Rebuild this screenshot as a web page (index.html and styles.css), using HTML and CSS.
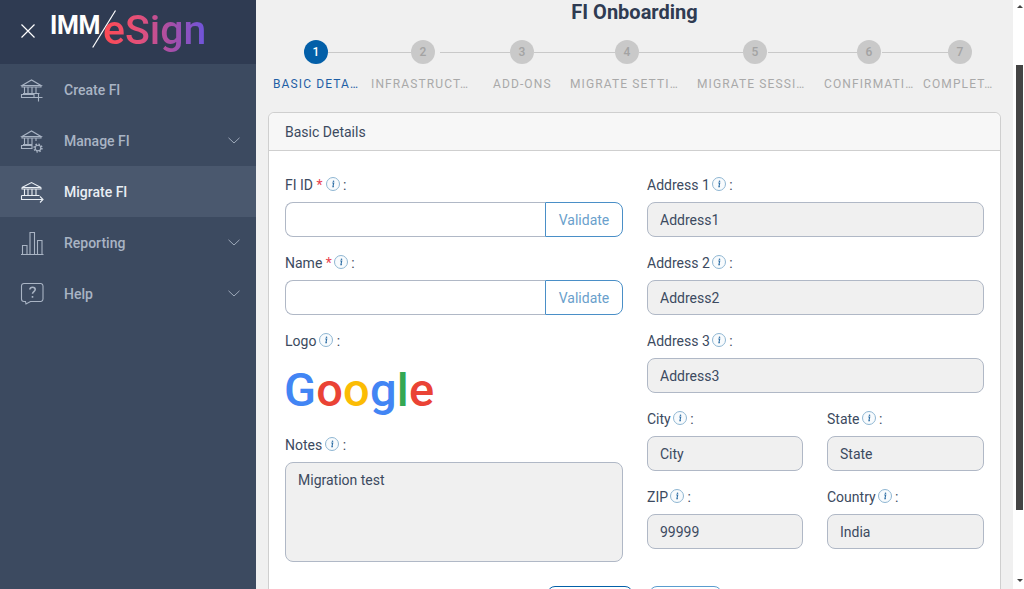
FILE: index.html
```html
<!DOCTYPE html>
<html lang="en">
<head>
<meta charset="utf-8">
<title>FI Onboarding</title>
<link rel="stylesheet" href="styles.css">
</head>
<body>
<div class="app">
  <aside class="sidebar">
    <header class="brand">
      <svg class="close" viewBox="0 0 14 14"><path d="M.5.5l13 13M13.5.5l-13 13"/></svg>
      <div class="wordmark">
        <span class="imm">IMM</span>
        <svg class="slash" viewBox="0 0 24 38"><path d="M23.5.5L.7 37.5"/></svg>
        <span class="esign">eSign</span>
      </div>
    </header>
    <nav>
      <a class="nav-item">
        <svg class="nav-icon" viewBox="0 0 24 24"><path d="M2 7.500L11.500 2 21 7.500zM2 7.500v1.500h19V7.500M4.500 9v6.500M8 9v6.500M12 9v6.500M16 9v6.500M3 15.500h16.500M1.500 19.500h12.500v-3H1.500zM18.500 15.500v8M14.500 19.500h8"/></svg>
        <span>Create FI</span>
      </a>
      <a class="nav-item">
        <svg class="nav-icon" viewBox="0 0 24 24"><path d="M2 7.500L11.500 2 21 7.500zM2 7.500v1.500h19V7.500M4.500 9v6.500M8 9v6.500M12 9v6.500M16 9v3M3 15.500h9.500M1.500 19.500h10.500v-3H1.500z"/><circle cx="18" cy="19" r="2.800"/><circle class="dash" cx="18" cy="19" r="3.900"/></svg>
        <span>Manage FI</span>
        <svg class="chevron" viewBox="0 0 12 7"><path d="M.5.800L6 6l5.500-5.200"/></svg>
      </a>
      <a class="nav-item active">
        <svg class="nav-icon" viewBox="0 0 24 24"><path d="M2 7.500L11.500 2.500 21 7.500zM2 7.500v1.500h19V7.500M4.500 9v6M8 9v6M12 9v6M16 9v6M1.500 15.500h18M1.500 15.500v4h21.500M20 16.500l3 3-3 3"/></svg>
        <span>Migrate FI</span>
      </a>
      <a class="nav-item">
        <svg class="nav-icon" viewBox="0 0 24 24"><path d="M1 23.500h22.500M2.500 23V14.500H7V23M10 23V1.500h4.500V23M17.500 23V9.500H22V23"/></svg>
        <span>Reporting</span>
        <svg class="chevron" viewBox="0 0 12 7"><path d="M.5.800L6 6l5.500-5.200"/></svg>
      </a>
      <a class="nav-item">
        <svg class="nav-icon" viewBox="0 0 24 24"><path d="M4 1.500h17a2.500 2.500 0 0 1 2 2.500v13a2.500 2.500 0 0 1-2 2.500h-10.500l-4.500 2.500-.5-2.500H4A2.500 2.500 0 0 1 1.500 17V4A2.500 2.500 0 0 1 4 1.500z"/><path class="q" d="M9.800 7.500c.2-1.500 1.300-2.300 2.700-2.300 1.500 0 2.700 1 2.700 2.300 0 2-2.700 2.200-2.700 4.300M12.500 14v1.800"/></svg>
        <span>Help</span>
        <svg class="chevron" viewBox="0 0 12 7"><path d="M.5.800L6 6l5.500-5.200"/></svg>
      </a>
    </nav>
  </aside>

  <main class="main">
    <h1 class="title">FI Onboarding</h1>

    <div class="track">
      <span class="dot current">1</span><i class="link l1"></i>
      <span class="dot">2</span><i class="link l2"></i>
      <span class="dot">3</span><i class="link l3"></i>
      <span class="dot">4</span><i class="link l4"></i>
      <span class="dot">5</span><i class="link l5"></i>
      <span class="dot">6</span><i class="link l6"></i>
      <span class="dot">7</span>
    </div>
    <div class="labels">
      <span class="step current">BASIC DETA…</span>
      <span class="step">INFRASTRUCT…</span>
      <span class="step">ADD-ONS</span>
      <span class="step">MIGRATE SETTI…</span>
      <span class="step">MIGRATE SESSI…</span>
      <span class="step">CONFIRMATI…</span>
      <span class="step">COMPLET…</span>
    </div>

    <section class="card">
      <div class="card-head">Basic Details</div>
      <div class="card-body">
        <div class="columns">
          <div class="col">
            <div class="field">
              <label class="lbl">FI ID <b>*</b><svg class="info" viewBox="0 0 14 14"><use href="#i"/></svg> :</label>
              <div class="group"><input class="input" type="text"><button class="validate">Validate</button></div>
            </div>
            <div class="field name">
              <label class="lbl">Name <b>*</b><svg class="info" viewBox="0 0 14 14"><use href="#i"/></svg> :</label>
              <div class="group"><input class="input" type="text"><button class="validate">Validate</button></div>
            </div>
            <div class="logo-field">
              <label class="lbl">Logo<svg class="info" viewBox="0 0 14 14"><use href="#i"/></svg> :</label>
              <div class="google"><span class="gb">G</span><span class="gr">o</span><span class="gy">o</span><span class="gb">g</span><span class="gg">l</span><span class="gr">e</span></div>
            </div>
            <div class="notes">
              <label class="lbl">Notes<svg class="info" viewBox="0 0 14 14"><use href="#i"/></svg> :</label>
              <textarea class="input area" disabled>Migration test</textarea>
            </div>
          </div>
          <div class="col">
            <div class="field">
              <label class="lbl">Address 1<svg class="info" viewBox="0 0 14 14"><use href="#i"/></svg> :</label>
              <input class="input" type="text" value="Address1" disabled>
            </div>
            <div class="field">
              <label class="lbl">Address 2<svg class="info" viewBox="0 0 14 14"><use href="#i"/></svg> :</label>
              <input class="input" type="text" value="Address2" disabled>
            </div>
            <div class="field">
              <label class="lbl">Address 3<svg class="info" viewBox="0 0 14 14"><use href="#i"/></svg> :</label>
              <input class="input" type="text" value="Address3" disabled>
            </div>
            <div class="pair">
              <div class="field">
                <label class="lbl">City<svg class="info" viewBox="0 0 14 14"><use href="#i"/></svg> :</label>
                <input class="input" type="text" value="City" disabled>
              </div>
              <div class="field">
                <label class="lbl">State<svg class="info" viewBox="0 0 14 14"><use href="#i"/></svg> :</label>
                <input class="input" type="text" value="State" disabled>
              </div>
              <div class="field last">
                <label class="lbl">ZIP<svg class="info" viewBox="0 0 14 14"><use href="#i"/></svg> :</label>
                <input class="input" type="text" value="99999" disabled>
              </div>
              <div class="field last">
                <label class="lbl">Country<svg class="info" viewBox="0 0 14 14"><use href="#i"/></svg> :</label>
                <input class="input" type="text" value="India" disabled>
              </div>
            </div>
          </div>
        </div>
        <div class="actions">
          <button class="btn primary"></button>
          <button class="btn secondary"></button>
        </div>
      </div>
    </section>
  </main>

  <div class="scrollbar">
    <span class="arrow up"></span>
    <span class="thumb"></span>
    <span class="arrow down"></span>
  </div>
</div>

<svg class="defs" width="0" height="0">
  <symbol id="i" viewBox="0 0 14 14">
    <circle cx="7" cy="7" r="6.500" fill="#f8fbfd" stroke="#8fb6d2"/>
    <path d="M6.200 6h1.500l-.8 3.600h1" fill="none" stroke="#2d6ea5" stroke-width="1.100"/>
    <circle cx="7.500" cy="4.200" r=".8" fill="#2d6ea5"/>
  </symbol>
</svg>
</body>
</html>
```
FILE: styles.css
```css
* { box-sizing: border-box; }
html, body { margin: 0; height: 589px; overflow: hidden; }
body { font-family: Roboto, "Liberation Sans", sans-serif; font-size: 14px; color: #3c4a60; background: #f0f0f0; }
.defs { position: absolute; }

.app { display: flex; height: 589px; overflow: hidden; }

/* Sidebar */
.sidebar { width: 256px; flex: none; background: #3c4a60; }
.brand { height: 64px; background: #2f3b52; display: flex; align-items: flex-start; padding: 10px 0 0 21px; }
.close { width: 14px; height: 14px; margin-top: 14px; fill: none; stroke: #fff; stroke-width: 1.200; flex: none; }
.wordmark { position: relative; display: flex; align-items: flex-start; margin-left: 16px; height: 44px; width: 160px; }
.imm { font-family: Roboto, sans-serif; font-weight: 700; font-size: 25px; line-height: 26px; letter-spacing: -.4px; color: #fff; margin: 3px 0 0 -1px; }
.slash { position: absolute; left: 41px; top: 0; width: 24px; height: 38px; fill: none; stroke: #fff; stroke-width: 1.200; }
.esign { position: absolute; left: 52px; top: -5px; font-family: Roboto, sans-serif; font-weight: 500; font-size: 41px; line-height: 50px; background: linear-gradient(90deg, #ff4a52 0%, #e3507a 35%, #a84fa6 65%, #6d55dc 100%); -webkit-background-clip: text; background-clip: text; color: transparent; }

.nav-item { height: 51px; display: flex; align-items: center; padding: 0 16px 0 20px; color: #a9b4c4; font-weight: 500; }
.nav-item.active { background: #4a586e; color: #e9eef4; }
.nav-icon { width: 24px; height: 26px; flex: none; margin-right: 20px; fill: none; stroke: #a9b4c4; stroke-width: 1.100; }
.nav-item.active .nav-icon { stroke: #e9eef4; }
.nav-icon .dash { stroke-dasharray: 1.500 1.560; stroke-width: 1.500; }
.nav-icon .q { stroke-width: 1.600; }
.chevron { width: 12px; height: 7px; margin-left: auto; fill: none; stroke: #a9b4c4; stroke-width: .9; }

/* Main */
.main { flex: 1; min-width: 0; padding: 0 12px; overflow: hidden; }
.title { margin: 0; height: 24px; line-height: 24px; font-size: 20px; font-weight: 700; text-align: center; color: #2f3b52; }

.track { display: flex; align-items: center; margin-top: 16px; padding-left: 36px; height: 24px; }
.dot { width: 24px; height: 24px; flex: none; border-radius: 50%; background: #c9c9c9; color: #a3a3a3; font-size: 12px; font-weight: 500; line-height: 24px; text-align: center; }
.dot.current { background: #035fa8; color: #fff; }
.link { display: block; height: 1px; background: #c9c9c9; flex: none; }
.l1 { width: 83px; }
.l2 { width: 70px; margin-left: 5px; }
.l3 { width: 81px; }
.l4 { width: 104px; }
.l5 { width: 89px; margin-left: 1px; }
.l6 { width: 66px; margin-left: 1px; }

.labels { display: grid; grid-template-columns: 98px 122px 77px 127px 127px 99px 70px; margin-top: 12px; padding-left: 5px; height: 16px; }
.step { font-size: 12px; line-height: 16px; letter-spacing: 1.120px; color: #a9a9a9; white-space: nowrap; }
.step.current { color: #1f5fa5; }

/* Card */
.card { margin-top: 20px; background: #fff; border: 1px solid #cfcfcf; border-radius: 6px; }
.card-head { height: 38px; line-height: 38px; padding-left: 16px; background: #f7f7f7; border-bottom: 1px solid #cfcfcf; border-radius: 6px 6px 0 0; }
.card-body { padding: 25px 16px 20px; }
.columns { display: grid; grid-template-columns: 338px 337px; column-gap: 24px; }

.lbl { display: flex; align-items: center; height: 18px; line-height: 18px; margin-bottom: 8px; white-space: pre; color: #3c4a60; }
.lbl b { color: #e8434f; font-weight: 400; }
.info { width: 14px; height: 14px; margin: -2px 0 0 2px; flex: none; }
.col:first-child .info { margin-left: 3px; }
.col:first-child .name .info { margin-left: 2px; }

.field { height: 78px; }
.field.last { height: 61px; }
.logo-field { height: 104px; }
.notes { height: 126px; }

.input { display: block; width: 100%; height: 35px; padding: 0 12px; border: 1px solid #b0b8c6; border-radius: 8px; background: #fff; font: 14px Roboto, sans-serif; color: #3c4a60; outline: 0; }
.input:disabled { background: #f0f0f0; color: #3c4a60; -webkit-text-fill-color: #3c4a60; opacity: 1; }
.area { height: 100px; padding: 8px 12px; resize: none; line-height: 18px; }

.group { display: flex; }
.group .input { flex: 1; min-width: 0; border-radius: 8px 0 0 8px; border-right: 0; }
.validate { width: 78px; height: 35px; flex: none; padding: 0; background: #fff; border: 1px solid #4a8fc7; border-radius: 0 8px 8px 0; color: #6a9fcc; font: 14px Roboto, sans-serif; }

.google { margin: 10px 0 0 -1px; font-family: Roboto, sans-serif; font-weight: 500; font-size: 47px; line-height: 60px; letter-spacing: .2px; }
.gb { color: #4285f4; }
.gr { color: #ea4335; }
.gy { color: #fbbc05; }
.gg { color: #34a853; }

.pair { display: grid; grid-template-columns: 156px 157px; column-gap: 24px; }

.actions { display: flex; justify-content: center; gap: 16px; margin-top: 24px; }
.btn { height: 35px; background: #fff; border-radius: 8px; padding: 0; }
.btn.primary { width: 86px; border: 1px solid #035fa8; }
.btn.secondary { width: 73px; border: 1px solid #5a9ccf; }

/* Scrollbar */
.scrollbar { width: 11px; flex: none; background: #fff; display: flex; flex-direction: column; align-items: center; padding-left: 2px; }
.arrow { width: 0; height: 0; border: 3px solid transparent; flex: none; }
.arrow.up { border-top-width: 0; border-bottom: 3px solid #444; margin-top: 5px; }
.arrow.down { border-bottom-width: 0; border-top: 3px solid #444; margin-top: 69px; }
.thumb { width: 7px; height: 445px; margin-top: 57px; background: #444; flex: none; }
```
